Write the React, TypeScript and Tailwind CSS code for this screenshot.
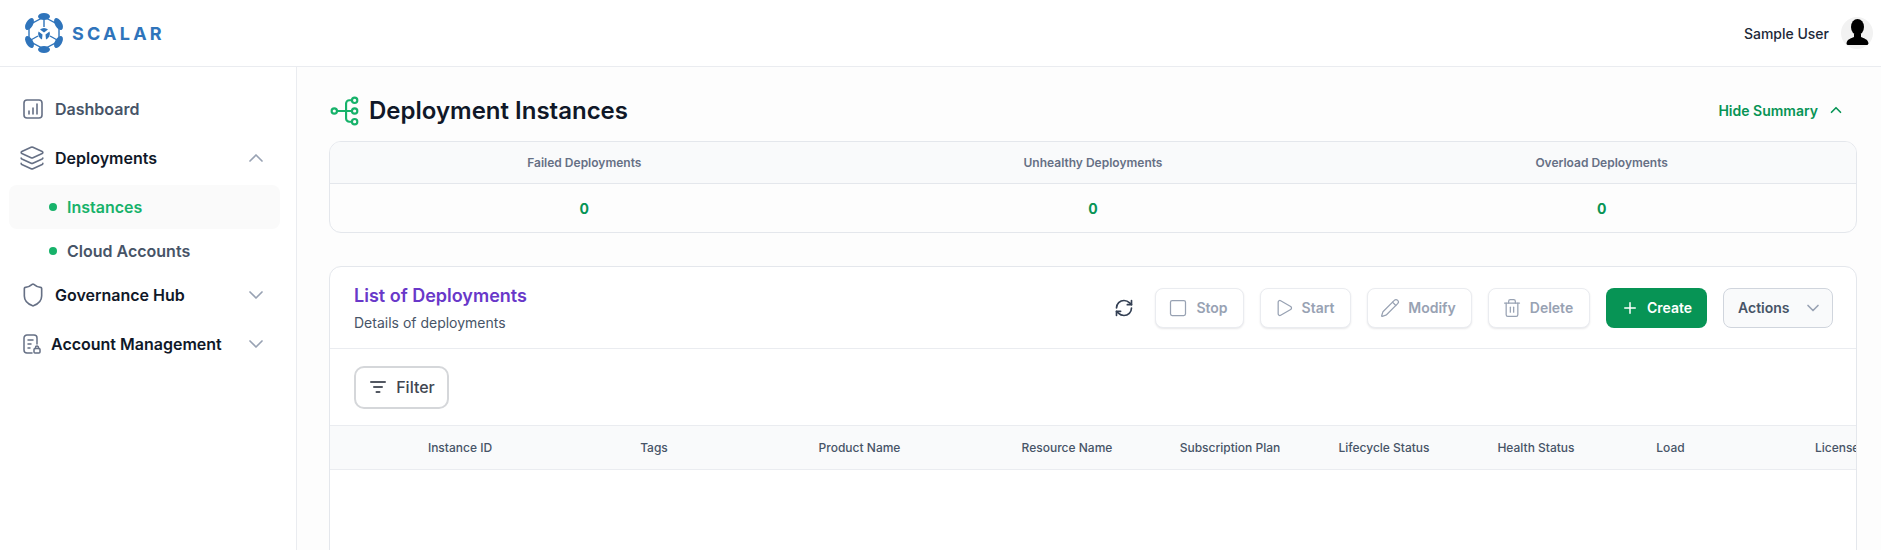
import React from "react";
import {
  ChevronDown,
  ChevronUp,
  Layers,
  Pencil,
  Play,
  Plus,
  RefreshCw,
  Shield,
  Square,
  Trash2,
} from "lucide-react";

const ScalarLogo = () => (
  <svg width="38" height="40" viewBox="0 0 38 40" className="shrink-0" fill="#2f74bb">
    <g stroke="#2f74bb" strokeWidth="1.4" fill="none">
      <path d="M19 4 L34 12 V28 L19 36 L4 28 V12 Z" />
      <path d="M19 4 V14 M34 28 L25 23 M4 28 L13 23" />
    </g>
    <ellipse cx="19" cy="3.500" rx="6" ry="3.500" />
    <ellipse cx="19" cy="36.500" rx="6" ry="3.500" />
    <ellipse cx="33.500" cy="11" rx="3.500" ry="6.500" transform="rotate(-30 33.500 11)" />
    <ellipse cx="4.500" cy="11" rx="3.500" ry="6.500" transform="rotate(30 4.500 11)" />
    <ellipse cx="33.500" cy="29" rx="3.500" ry="6.500" transform="rotate(30 33.500 29)" />
    <ellipse cx="4.500" cy="29" rx="3.500" ry="6.500" transform="rotate(-30 4.500 29)" />
    <path d="M15 16.500 A6 6 0 0 1 23 16.500 L19 19.500 Z" />
    <path d="M13.500 18.500 L17.500 21.500 L17 26.500 A6.500 6.500 0 0 1 13.500 18.500 Z" />
    <path d="M24.500 18.500 L20.500 21.500 L21 26.500 A6.500 6.500 0 0 0 24.500 18.500 Z" />
  </svg>
);

const DashboardIcon = () => (
  <svg width="20" height="20" viewBox="0 0 20 20" fill="none" stroke="#667085" strokeWidth="1.6" strokeLinecap="round">
    <rect x="1" y="1" width="18" height="18" rx="3" />
    <path d="M6 15v-3M10 15V9M14 15V5" />
  </svg>
);

const AccountIcon = () => (
  <svg width="18" height="20" viewBox="0 0 18 20" fill="none" stroke="#667085" strokeWidth="1.5" strokeLinecap="round">
    <path d="M9 19H4a3 3 0 0 1-3-3V4a3 3 0 0 1 3-3h7a3 3 0 0 1 3 3v6" />
    <path d="M5 6h5M5 10h3M5 14h2" />
    <rect x="11" y="14.500" width="6" height="4.500" rx="1" />
    <path d="M12.500 14.500v-1a1.500 1.500 0 0 1 3 0v1" />
  </svg>
);

const TreeIcon = () => (
  <svg width="30" height="30" viewBox="0 0 28 28" fill="none" stroke="#17b26a" strokeWidth="2">
    <circle cx="4" cy="14" r="2.500" />
    <circle cx="23" cy="4" r="2.500" />
    <circle cx="23" cy="14" r="2.500" />
    <circle cx="23" cy="24" r="2.500" />
    <path d="M6.500 14h14M20.500 4H18a3 3 0 0 0-3 3v14a3 3 0 0 0 3 3h2.500" />
  </svg>
);

const Avatar = () => (
  <div className="w-8 h-8 rounded-full bg-[#f2f2f2] overflow-hidden flex items-center justify-center">
    <svg width="32" height="32" viewBox="0 0 32 32" fill="#000">
      <ellipse cx="16.500" cy="10" rx="6.500" ry="8" />
      <path d="M13 17h7v3c3 1.500 7 2 7.500 6.500 0 1-1 1.500-2 1.500H7.500c-1 0-2-.5-2-1.500C6 22 10 21.500 13 20z" />
    </svg>
  </div>
);

const SubItem = ({ label, active }: { label: string; active?: boolean }) => (
  <div className={`h-11 rounded-lg flex items-center pl-[40px] ${active ? "bg-[#fafafa]" : ""}`}>
    <span className="w-2 h-2 rounded-full bg-[#17b26a] mr-[10px]" />
    <span className={`text-[16px] font-semibold ${active ? "text-[#17b26a]" : "text-[#475467]"}`}>{label}</span>
  </div>
);

const DisabledButton = ({ icon, label, w }: { icon: React.ReactNode; label: string; w: string }) => (
  <button className={`h-10 ${w} flex items-center justify-center gap-[8px] pr-[3px] rounded-lg border border-[#eaecf0] bg-white shadow-[0_1px_2px_rgba(16,24,40,0.1)] text-[14px] font-semibold text-[#98a2b3]`}>
    {icon}
    {label}
  </button>
);

const summary = ["Failed Deployments", "Unhealthy Deployments", "Overload Deployments"];

const columns = [
  { label: "Instance ID", w: "w-[198px]" },
  { label: "Tags", w: "w-[190px]" },
  { label: "Product Name", w: "w-[221px]" },
  { label: "Resource Name", w: "w-[194px]" },
  { label: "Subscription Plan", w: "w-[132px]" },
  { label: "Lifecycle Status", w: "w-[176px]" },
  { label: "Health Status", w: "w-[128px]" },
  { label: "Load", w: "w-[141px]" },
  { label: "License Type", w: "w-[224px]" },
];

export default function App() {
  return (
    <div className="h-[550px] w-full overflow-hidden bg-white font-['Inter',sans-serif] text-[#101828]">
      <header className="h-[67px] border-b border-[#eaecf0] flex items-center justify-between pl-[25px] pr-[8px]">
        <div className="flex items-center gap-[9px]">
          <ScalarLogo />
          <span className="text-[18px] font-bold tracking-[0.18em] text-[#2f74bb]">SCALAR</span>
        </div>
        <div className="flex items-center gap-[12px]">
          <span className="text-[14px] font-medium text-[#1d2939]">Sample User</span>
          <Avatar />
        </div>
      </header>

      <div className="flex h-[483px]">
        <aside className="w-[297px] shrink-0 border-r border-[#eaecf0] pt-[20px] pl-[9px] pr-[16px]">
          <div className="h-11 flex items-center pl-[14px] gap-[12px]">
            <DashboardIcon />
            <span className="text-[16px] font-semibold text-[#475467]">Dashboard</span>
          </div>
          <div className="mt-[5px] mb-[5px] h-11 flex items-center pl-[10px] pr-[12px]">
            <Layers size={26} color="#667085" strokeWidth={1.5} />
            <span className="ml-[10px] text-[16px] font-semibold text-[#101828]">Deployments</span>
            <ChevronUp size={24} color="#98a2b3" strokeWidth={1.7} className="ml-auto" />
          </div>
          <SubItem label="Instances" active />
          <SubItem label="Cloud Accounts" />
          <div className="h-11 flex items-center pl-[11px] pr-[12px]">
            <Shield size={26} color="#667085" strokeWidth={1.5} />
            <span className="ml-[9px] text-[16px] font-semibold text-[#101828]">Governance Hub</span>
            <ChevronDown size={24} color="#98a2b3" strokeWidth={1.7} className="ml-auto" />
          </div>
          <div className="mt-[5px] h-11 flex items-center pl-[14px] pr-[12px]">
            <AccountIcon />
            <span className="ml-[10px] text-[16px] font-semibold text-[#101828]">Account Management</span>
            <ChevronDown size={24} color="#98a2b3" strokeWidth={1.7} className="ml-auto" />
          </div>
        </aside>

        <main className="flex-1 min-w-0 bg-[#fdfdfd] pl-[32px] pr-[24px] pt-[24px]">
          <div className="h-[50px] flex items-start justify-between">
            <div className="flex items-center gap-[9px] h-[40px] ml-[1px]">
              <TreeIcon />
              <h1 className="text-[24px] leading-8 font-semibold text-[#101828]">Deployment Instances</h1>
            </div>
            <div className="flex items-center gap-[9px] h-[38px] pr-[12px] text-[#079455]">
              <span className="text-[14px] font-semibold">Hide Summary</span>
              <ChevronUp size={18} strokeWidth={2.2} />
            </div>
          </div>

          <section className="rounded-xl border border-[#e4e7ec] bg-[#fdfdfd] overflow-hidden">
            <div className="grid grid-cols-[repeat(3,1fr)] h-[42px] bg-[#f9fafb] border-b border-[#e4e7ec] items-center">
              {summary.map((s) => (
                <div key={s} className="text-center text-[12px] font-semibold text-[#667085]">{s}</div>
              ))}
            </div>
            <div className="grid grid-cols-[repeat(3,1fr)] h-[48px] items-center">
              {summary.map((s) => (
                <div key={s} className="text-center text-[14px] font-bold text-[#079455]">0</div>
              ))}
            </div>
          </section>

          <section className="mt-[33px] rounded-xl border border-[#e4e7ec] bg-white overflow-hidden h-[300px]">
            <div className="h-[82px] border-b border-[#eaecf0] flex items-center justify-between pl-[24px] pr-[23px]">
              <div>
                <h2 className="text-[18px] leading-7 font-semibold text-[#6938c9]">List of Deployments</h2>
                <p className="text-[14px] leading-5 mt-[3px] text-[#475467]">Details of deployments</p>
              </div>
              <div className="flex items-center gap-[16px]">
                <RefreshCw size={20} color="#344054" className="mr-[5px]" />
                <DisabledButton w="w-[89px]" label="Stop" icon={<Square size={20} strokeWidth={1.5} />} />
                <DisabledButton w="w-[91px]" label="Start" icon={<Play size={20} strokeWidth={1.5} />} />
                <DisabledButton w="w-[105px]" label="Modify" icon={<Pencil size={20} strokeWidth={1.5} />} />
                <DisabledButton w="w-[102px]" label="Delete" icon={<Trash2 size={20} strokeWidth={1.5} />} />
                <button className="h-10 w-[101px] flex items-center justify-center gap-2 rounded-lg bg-[#079455] text-white text-[14px] font-semibold">
                  <Plus size={18} />
                  Create
                </button>
                <button className="h-10 w-[110px] flex items-center justify-between pl-[14px] pr-[9px] rounded-lg border border-[#d0d5dd] bg-[#f9fafb] text-[14px] font-semibold text-[#475467]">
                  Actions
                  <ChevronDown size={20} color="#98a2b3" />
                </button>
              </div>
            </div>
            <div className="h-[76px] flex items-center pl-[24px]">
              <button className="h-[43px] w-[95px] flex items-center justify-center gap-[8px] rounded-[10px] border-2 border-[#d5d7da] bg-white text-[16px] font-medium text-[#414651]">
                <svg width="20" height="20" viewBox="0 0 20 20" fill="none" stroke="#535862" strokeWidth="2" strokeLinecap="round">
                  <path d="M3 5h14M6 10h8M8.500 15h3" />
                </svg>
                Filter
              </button>
            </div>
            <div className="h-[45px] flex items-center bg-[#f9fafb] border-y border-[#eaecf0] pl-[31px] overflow-hidden text-[12px] font-medium text-[#475467] whitespace-nowrap">
              {columns.map((c) => (
                <div key={c.label} className={`${c.w} shrink-0 text-center`}>{c.label}</div>
              ))}
            </div>
          </section>
        </main>
      </div>
    </div>
  );
}
